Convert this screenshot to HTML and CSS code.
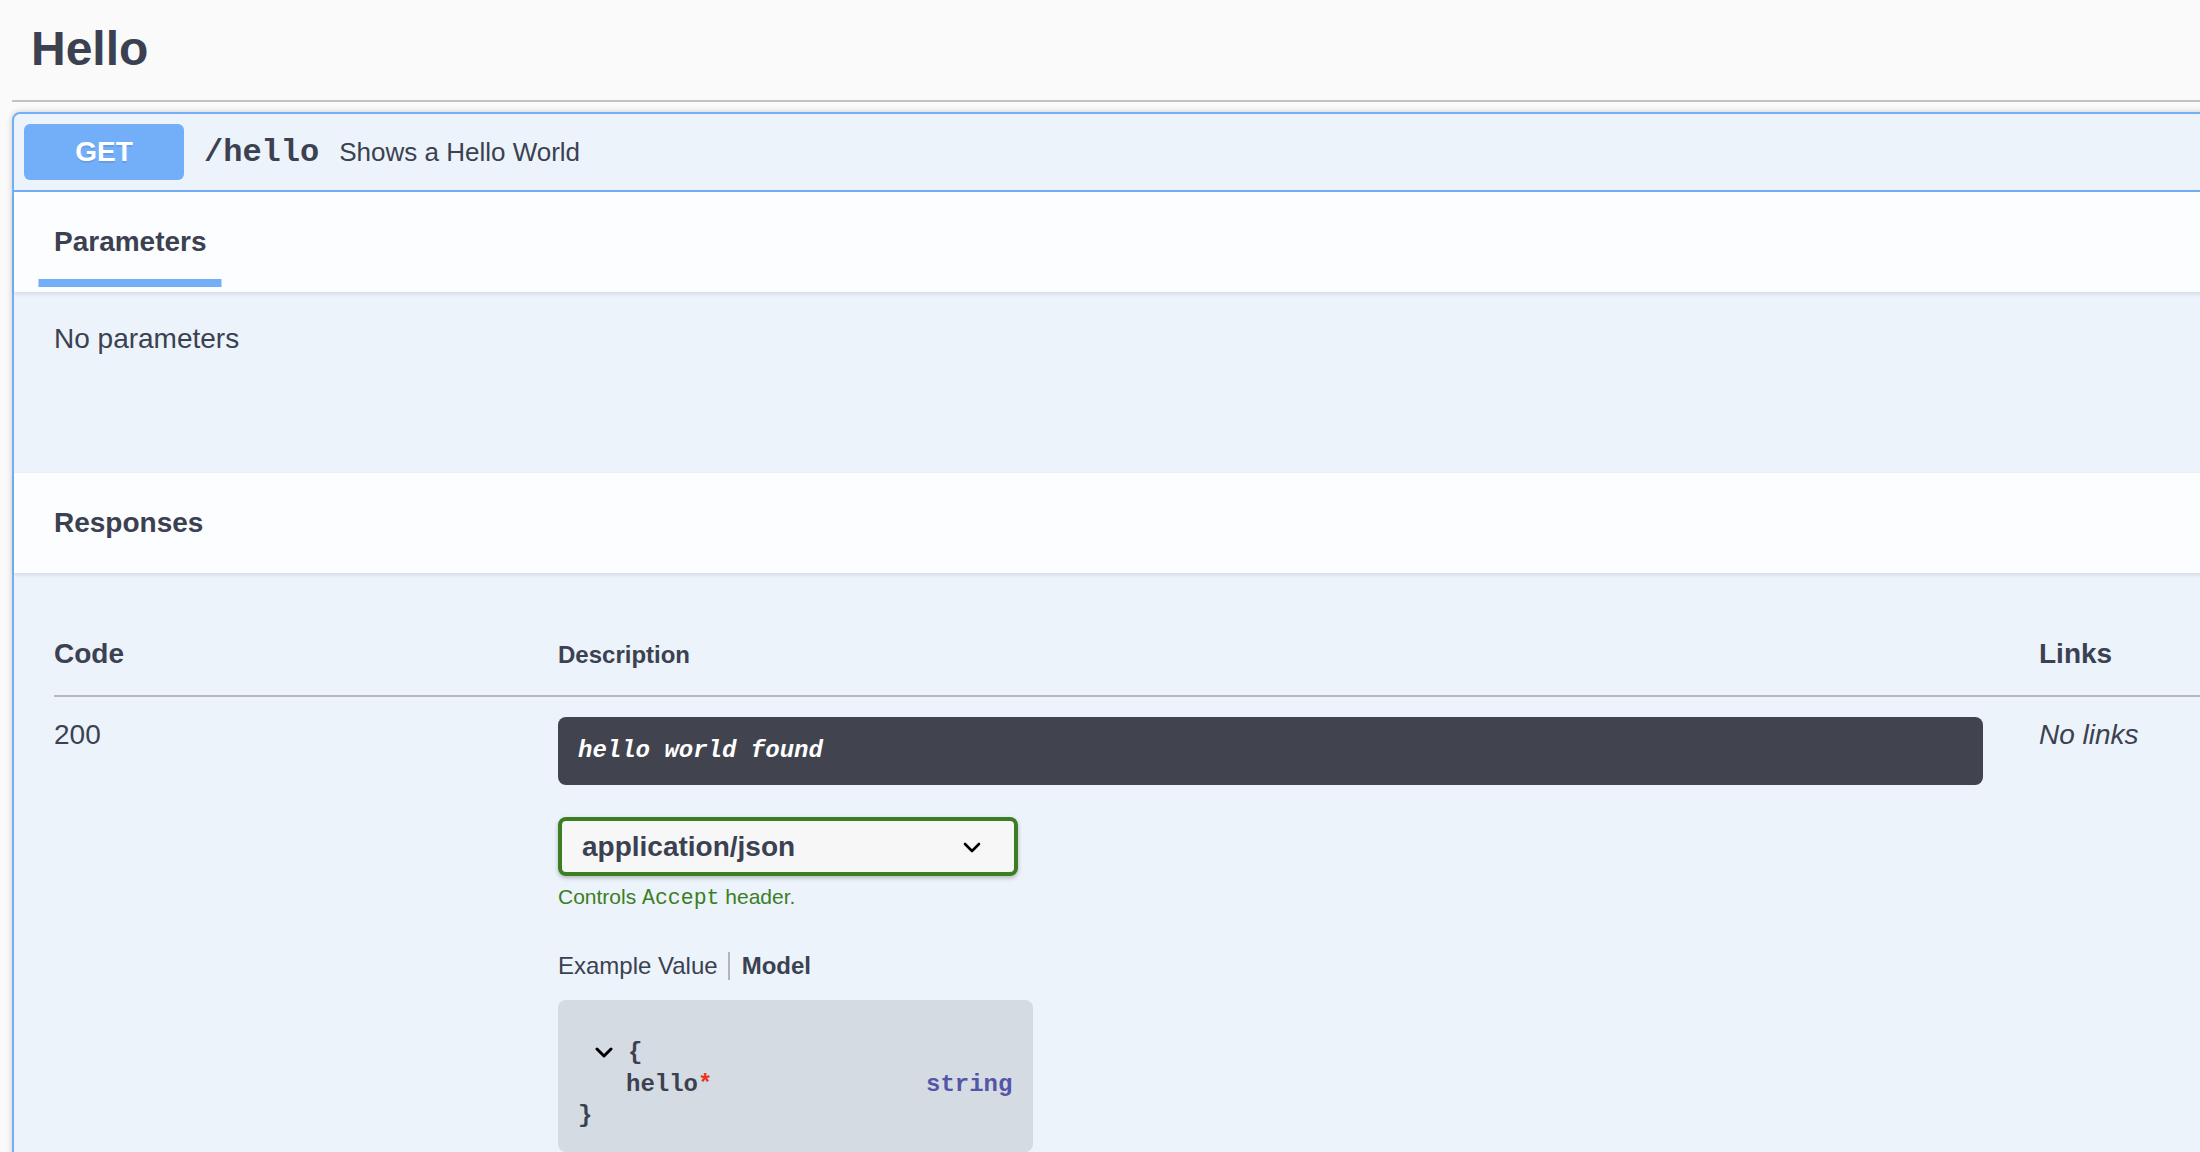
FILE: index.html
```html
<!DOCTYPE html>
<html lang="en">

<head>
    <meta charset="UTF-8">
    <title>Hello API</title>
    <link rel="stylesheet" href="styles.css">
</head>

<body>
    <div class="wrapper">
        <h3 class="opblock-tag">Hello</h3>

        <div class="opblock">
            <div class="opblock-summary">
                <span class="method">GET</span>
                <span class="path">/hello</span>
                <span class="summary-desc">Shows a Hello World</span>
            </div>

            <div class="section-header">
                <h4 class="tab-item"><span>Parameters</span></h4>
            </div>
            <div class="params-body">
                <p>No parameters</p>
            </div>

            <div class="section-header">
                <h4>Responses</h4>
            </div>
            <div class="responses-inner">
                <div class="resp-row resp-head">
                    <div class="col-status">Code</div>
                    <div class="col-desc-head">Description</div>
                    <div class="col-links">Links</div>
                </div>
                <div class="resp-row resp-body">
                    <div class="col-status">200</div>
                    <div class="col-desc">
                        <div class="markdown">hello world found</div>
                        <div class="media-select">
                            <span>application/json</span>
                            <svg class="chevron" width="18" height="11" viewBox="0 0 18 11">
                                <path d="M2 2 L9 9 L16 2" fill="none" stroke="#000" stroke-width="2.6" stroke-linecap="round" stroke-linejoin="round"/>
                            </svg>
                        </div>
                        <div class="accept-msg">Controls <code>Accept</code> header.</div>
                        <ul class="tabs">
                            <li class="tab-first">Example Value</li>
                            <li class="tab-active">Model</li>
                        </ul>
                        <div class="model-box">
                            <div class="model-open">
                                <svg class="toggle" width="18" height="11" viewBox="0 0 18 11">
                                    <path d="M2 2 L9 9 L16 2" fill="none" stroke="#000" stroke-width="3" stroke-linecap="round" stroke-linejoin="round"/>
                                </svg>
                                <span>{</span>
                            </div>
                            <div class="model-prop">
                                <span class="prop-name">hello<span class="star">*</span></span>
                                <span class="prop-type">string</span>
                            </div>
                            <div class="model-close">}</div>
                        </div>
                    </div>
                    <div class="col-links"><i>No links</i></div>
                </div>
            </div>
        </div>
    </div>
</body>

</html>
```

FILE: styles.css
```css
body {
    margin: 0;
    background: #fafafa;
    overflow: hidden;
    font-family: "Liberation Sans", Arial, sans-serif;
    color: #3b4151;
}

div.wrapper {
    margin-left: 12px;
    width: 2260px;
}

h3.opblock-tag {
    margin: 0 0 10px;
    padding: 21px 40px 24px 19px;
    font-size: 48px;
    line-height: 55px;
    font-weight: 700;
    border-bottom: 2px solid #c1c3c7;
}

div.opblock {
    border: 2px solid #73aff8;
    border-radius: 8px;
    background: #ecf3fa;
    box-shadow: 0 0 6px rgba(0, 0, 0, 0.19);
    margin-bottom: 30px;
}

/* summary bar */
div.opblock-summary {
    display: flex;
    align-items: center;
    padding: 10px;
    border-bottom: 2px solid #73aff8;
}

span.method {
    width: 160px;
    padding: 12px 0;
    text-align: center;
    font-size: 28px;
    line-height: 32px;
    font-weight: 700;
    color: #fff;
    background: #73aff8;
    border-radius: 6px;
    text-shadow: 0 2px 0 rgba(0, 0, 0, 0.1);
}

span.path {
    padding: 0 20px;
    font-family: "Liberation Mono", "Courier New", monospace;
    font-size: 32px;
    font-weight: 700;
}

span.summary-desc {
    font-size: 26px;
}

/* section headers */
div.section-header {
    display: flex;
    align-items: center;
    box-sizing: border-box;
    min-height: 100px;
    padding: 16px 40px;
    background: #fbfdfe;
    box-shadow: 0 2px 4px rgba(0, 0, 0, 0.1);
}

div.section-header h4 {
    margin: 0;
    font-size: 28px;
    line-height: 32px;
    font-weight: 700;
}

h4.tab-item span {
    position: relative;
}

h4.tab-item span:after {
    content: "";
    position: absolute;
    bottom: -30px;
    left: 50%;
    width: 120%;
    height: 8px;
    transform: translateX(-50%);
    background: #73aff8;
}

div.params-body {
    box-sizing: border-box;
    min-height: 181px;
    padding: 31px 40px 30px;
}

div.params-body p {
    margin: 0;
    font-size: 28px;
    line-height: 32px;
}

/* responses */
div.responses-inner {
    padding: 40px 40px 60px;
}

div.resp-row {
    display: grid;
    grid-template-columns: 504px 1425px 1fr;
}

div.resp-head {
    align-items: baseline;
    padding: 25px 0 24px;
    border-bottom: 2px solid #b4b8c1;
    font-weight: 700;
    font-size: 28px;
    line-height: 32px;
}

div.resp-head .col-desc-head {
    font-size: 24px;
}

div.resp-body {
    padding-top: 20px;
    font-size: 28px;
    line-height: 36px;
}

div.col-links {
    padding-left: 56px;
}

div.markdown {
    padding: 20px;
    border-radius: 8px;
    background: #41444e;
    color: #fff;
    font-family: "Liberation Mono", "Courier New", monospace;
    font-size: 24px;
    line-height: 28px;
    font-weight: 700;
    font-style: italic;
}

div.media-select {
    display: flex;
    align-items: center;
    justify-content: space-between;
    box-sizing: border-box;
    width: 460px;
    margin-top: 32px;
    padding: 10px 33px 10px 20px;
    border: 4px solid #3b7e23;
    border-radius: 8px;
    background: #f7f7f7;
    box-shadow: 0 2px 4px 0 rgba(0, 0, 0, 0.25);
    font-size: 28px;
    line-height: 31px;
    font-weight: 700;
}

svg.chevron {
    margin-top: 2px;
}

div.accept-msg {
    margin-top: 10px;
    font-size: 21px;
    line-height: 22.5px;
    color: #3b7e23;
}

div.accept-msg code {
    font-family: "Liberation Mono", "Courier New", monospace;
    font-size: 21.5px;
}

ul.tabs {
    display: flex;
    list-style: none;
    margin: 42px 0 20px;
    padding: 0;
    font-size: 24px;
    line-height: 28px;
}

li.tab-first {
    padding-right: 10px;
    border-right: 2px solid rgba(69, 69, 69, 0.35);
}

li.tab-active {
    margin-left: 12px;
    font-weight: 700;
}

/* model */
div.model-box {
    box-sizing: border-box;
    width: 475px;
    padding: 20px 20px 22px;
    border-radius: 8px;
    background: #d5dbe2;
    font-family: "Liberation Mono", "Courier New", monospace;
    font-size: 24px;
    line-height: 28px;
    font-weight: 700;
}

div.model-open {
    display: flex;
    align-items: center;
    gap: 15px;
    margin-top: 19px;
    padding-left: 17px;
}

div.model-prop {
    display: flex;
    margin-top: 4px;
    padding-left: 48px;
}

span.prop-name {
    width: 300px;
}

span.star {
    color: #ea3323;
}

span.prop-type {
    color: #5555a8;
}

div.model-close {
    margin-top: 3px;
}
```
